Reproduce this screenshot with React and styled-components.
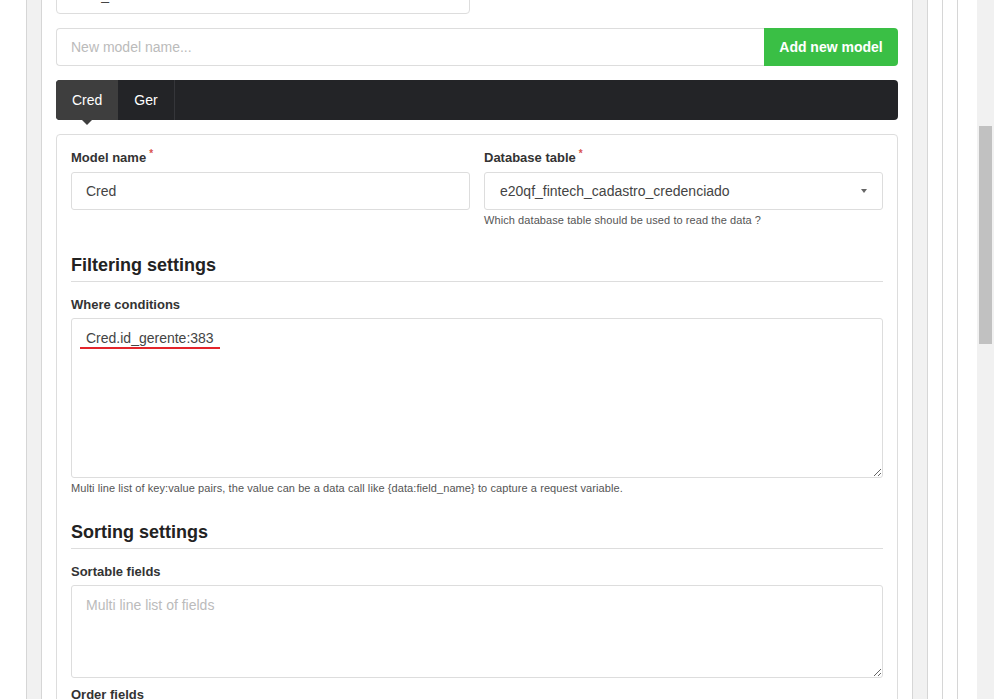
import React from "react";
import styled, { createGlobalStyle } from "styled-components";

const GlobalStyle = createGlobalStyle`
  html, body {
    margin: 0;
    padding: 0;
    height: 100%;
    overflow: hidden;
    background: #fff;
  }
  body {
    font-family: "Liberation Sans", Arial, sans-serif;
    color: #333;
  }
  #root {
    height: 100%;
  }
`;

const Page = styled.div`
  display: flex;
  height: 100vh;
  overflow: hidden;
`;

const Spacer = styled.div`
  flex: ${(p) => (p.$w ? "none" : "1")};
  width: ${(p) => (p.$w ? `${p.$w}px` : "auto")};
`;

const Rail = styled.div`
  flex: none;
  width: 15px;
  box-sizing: border-box;
  background: ${(p) => (p.$gray ? "#f1f1f1" : "#fff")};
  ${(p) => (p.$side === "left" ? "border-left" : "border-right")}: 1px solid #d6d6d6;
`;

const Main = styled.main`
  flex: none;
  width: 872px;
  box-sizing: border-box;
  border-left: 1px solid #d6d6d6;
  border-right: 1px solid #d6d6d6;
  padding: 0 14px;
  background: #fff;
`;

const ClippedInput = styled.input`
  display: block;
  box-sizing: border-box;
  width: calc(50% - 7px);
  height: 38px;
  margin: -24px 0 0;
  border: 1px solid #ddd;
  border-radius: 4px;
  padding: 0 14px;
  font: 14px "Liberation Sans", Arial, sans-serif;
  color: #444;
  outline: none;
`;

const NewModelRow = styled.div`
  display: flex;
  height: 38px;
  margin-top: 14px;
`;

const NameInput = styled.input`
  flex: 1;
  box-sizing: border-box;
  height: 38px;
  border: 1px solid #ddd;
  border-right: none;
  border-radius: 4px 0 0 4px;
  padding: 0 14px;
  font: 14px "Liberation Sans", Arial, sans-serif;
  color: #444;
  outline: none;

  &::placeholder {
    color: #bbb;
  }
`;

const AddButton = styled.button`
  flex: none;
  width: 134px;
  height: 38px;
  border: none;
  border-radius: 0 4px 4px 0;
  background: #3abf45;
  color: #fff;
  font: bold 14px "Liberation Sans", Arial, sans-serif;
  padding: 0;
  cursor: pointer;
`;

const TabBar = styled.nav`
  display: flex;
  height: 40px;
  margin-top: 14px;
  background: #232427;
  border-radius: 4px;
`;

const Tab = styled.div`
  position: relative;
  padding: 0 16px;
  line-height: 40px;
  font-size: 14px;
  color: #fff;
  background: ${(p) => (p.$active ? "#3e3e3e" : "transparent")};
  border-radius: ${(p) => (p.$active ? "4px 0 0 4px" : "0")};
  border-right: ${(p) => (p.$active ? "none" : "1px solid #35363a")};

  ${(p) =>
    p.$active &&
    `
    &::after {
      content: "";
      position: absolute;
      left: 50%;
      bottom: -5px;
      margin-left: -5px;
      border-left: 5px solid transparent;
      border-right: 5px solid transparent;
      border-top: 5px solid #3e3e3e;
    }
  `}
`;

const Card = styled.section`
  margin-top: 14px;
  border: 1px solid #ddd;
  border-radius: 4px;
  padding: 14px 14px 40px;
  background: #fff;
`;

const Row = styled.div`
  display: grid;
  grid-template-columns: 1fr 1fr;
  column-gap: 14px;
`;

const Group = styled.div`
  margin-top: ${(p) => p.$mt || 0}px;
`;

const Label = styled.label`
  display: block;
  font-size: 13px;
  font-weight: bold;
  line-height: 17px;
  color: #333;
  margin-bottom: 5px;
`;

const Required = styled.span`
  position: relative;
  top: -5px;
  margin-left: 3px;
  font-size: 10px;
  color: #d9534f;
`;

const TextInput = styled.input`
  display: block;
  box-sizing: border-box;
  width: 100%;
  height: 38px;
  border: 1px solid #ddd;
  border-radius: 3px;
  padding: 0 14px;
  font: 14px "Liberation Sans", Arial, sans-serif;
  color: #444;
  outline: none;
`;

const SelectBox = styled.div`
  display: flex;
  align-items: center;
  justify-content: space-between;
  box-sizing: border-box;
  height: 38px;
  border: 1px solid #ddd;
  border-radius: 3px;
  padding: 0 15px;
  font-size: 14px;
  color: #444;
`;

const Caret = styled.span`
  width: 0;
  height: 0;
  border-left: 3.5px solid transparent;
  border-right: 3.5px solid transparent;
  border-top: 4px solid #666;
`;

const Help = styled.div`
  margin-top: 3px;
  font-size: 11px;
  line-height: 15px;
  letter-spacing: 0.08px;
  color: #555;
`;

const SectionTitle = styled.h3`
  margin: ${(p) => p.$mt}px 0 0;
  padding-bottom: 4px;
  border-bottom: 1px solid #ddd;
  font-size: 18px;
  line-height: 23px;
  font-weight: bold;
  color: #222;
`;

const AreaWrap = styled.div`
  position: relative;
`;

const TextArea = styled.textarea`
  display: block;
  box-sizing: border-box;
  width: 100%;
  height: ${(p) => p.$h}px;
  margin: 0;
  border: 1px solid #ddd;
  border-radius: 3px;
  padding: 9px 14px;
  font: 14px/20px "Liberation Sans", Arial, sans-serif;
  color: #444;
  outline: none;

  &::placeholder {
    color: #bbb;
  }
`;

const RedMark = styled.span`
  position: absolute;
  left: 9px;
  top: 29px;
  width: 140px;
  height: 2px;
  background: #e3242b;
  pointer-events: none;
`;

const ScrollTrack = styled.div`
  flex: none;
  width: 17px;
  box-sizing: border-box;
  padding: 126px 2px 0;
  background: #f1f1f1;
`;

const ScrollThumb = styled.div`
  height: 218px;
  background: #c1c1c1;
`;

export default function App() {
  return (
    <>
      <GlobalStyle />
      <Page>
        <Spacer $w={26} />
        <Rail $gray $side="left" />
        <Main>
          <ClippedInput readOnly value="Cred_" />

          <NewModelRow>
            <NameInput placeholder="New model name..." />
            <AddButton>Add new model</AddButton>
          </NewModelRow>

          <TabBar>
            <Tab $active>Cred</Tab>
            <Tab>Ger</Tab>
          </TabBar>

          <Card>
            <Row>
              <Group>
                <Label>
                  Model name<Required>*</Required>
                </Label>
                <TextInput readOnly value="Cred" />
              </Group>
              <Group>
                <Label>
                  Database table<Required>*</Required>
                </Label>
                <SelectBox>
                  <span>e20qf_fintech_cadastro_credenciado</span>
                  <Caret />
                </SelectBox>
                <Help>Which database table should be used to read the data ?</Help>
              </Group>
            </Row>

            <SectionTitle $mt={26}>Filtering settings</SectionTitle>
            <Group $mt={14}>
              <Label>Where conditions</Label>
              <AreaWrap>
                <TextArea $h={160} readOnly value="Cred.id_gerente:383" />
                <RedMark />
              </AreaWrap>
              <Help>
                Multi line list of key:value pairs, the value can be a data call like
                {" {data:field_name} "}to capture a request variable.
              </Help>
            </Group>

            <SectionTitle $mt={25}>Sorting settings</SectionTitle>
            <Group $mt={14}>
              <Label>Sortable fields</Label>
              <TextArea $h={93} placeholder="Multi line list of fields" />
            </Group>
            <Group $mt={8}>
              <Label>Order fields</Label>
              <TextArea $h={93} />
            </Group>
          </Card>
        </Main>
        <Rail $gray />
        <Rail />
        <Rail />
        <Spacer />
        <ScrollTrack>
          <ScrollThumb />
        </ScrollTrack>
      </Page>
    </>
  );
}
